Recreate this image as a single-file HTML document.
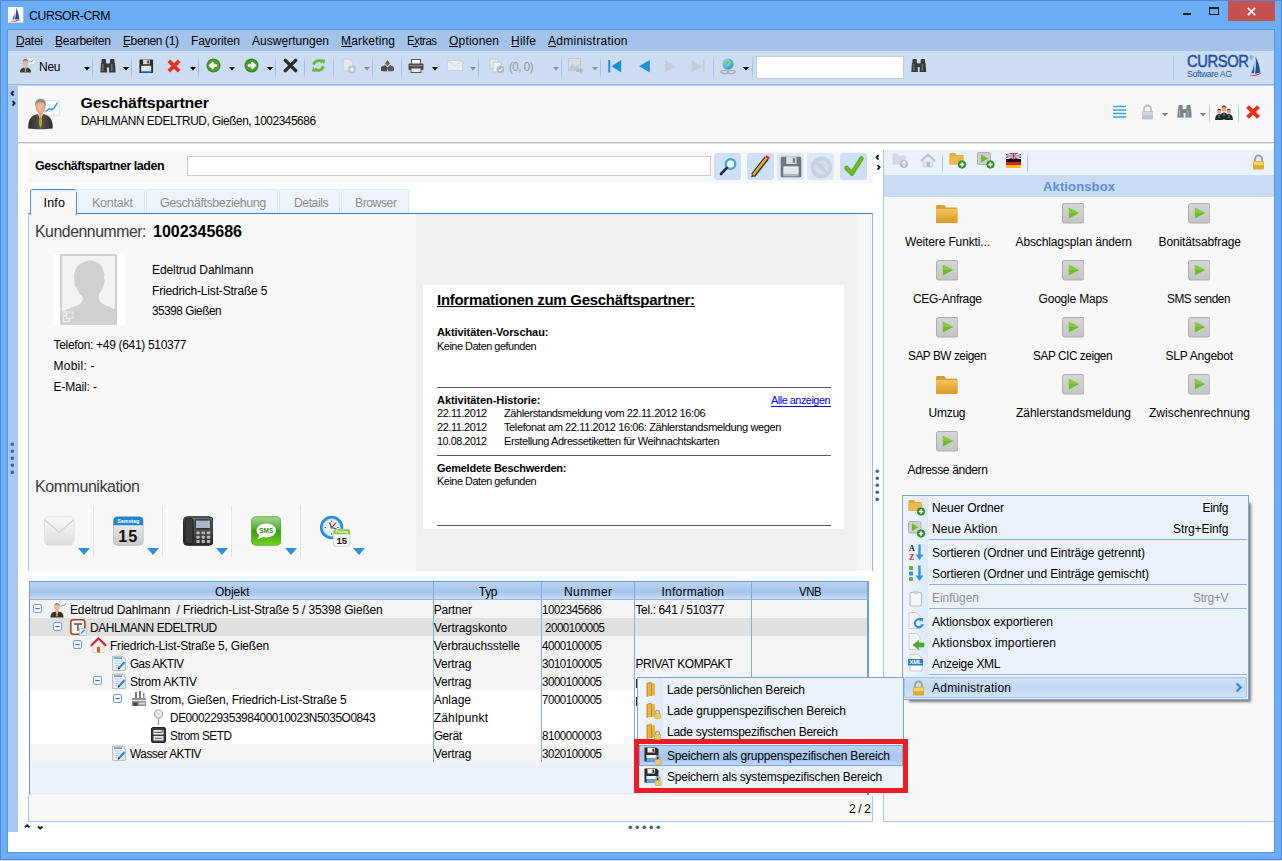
<!DOCTYPE html>
<html lang="de">
<head>
<meta charset="utf-8">
<title>CURSOR-CRM</title>
<style>
html,body{margin:0;padding:0}
body{width:1282px;height:861px;overflow:hidden;position:relative;background:#6BADF6;font-family:"Liberation Sans",sans-serif;font-size:12px;color:#000}
#app{position:absolute;left:0;top:0;width:1282px;height:861px;overflow:hidden}
#app div,#app svg,#app span.t{position:absolute}
#app div{box-sizing:border-box}
span.t{white-space:pre;line-height:1;transform-origin:0 50%}
</style>
</head>
<body>
<div id="app">
<div style="left:0px;top:0px;width:1282px;height:860px;background:#6BADF6;border:1px solid #5288CB;"></div>
<div style="left:0px;top:860px;width:1282px;height:1px;background:#E4EAF5;"></div>
<div style="left:8px;top:7px;width:16px;height:16px;background:#fff;"></div>
<svg style="left:8px;top:7px" width="16" height="16" viewBox="0 0 16 16"><path d="M8.200 1c2 3.500 3 7.500 2.800 11.500H6.800c1-3.700 1.500-7.500 1.400-11.500z" fill="#1F4E9C"/><path d="M6.700 4c-.2 3-1 5.800-2.500 8.500h2.300z" fill="#3A66AE"/><path d="M3 14.200c3.500 0 6.500-.8 9.500-2.200-2.300 2.500-5.800 3.400-9.500 2.200z" fill="#D8222A"/><path d="M15.500 0v16H0" stroke="#B9B9B9" stroke-width="1" fill="none"/></svg>
<span class="t" style="left:29px;top:9px;font-size:13.5px;letter-spacing:-0.45px;transform:scaleX(0.9086);">CURSOR-CRM</span>
<div style="left:1183px;top:13px;width:8px;height:2px;background:#1a1a1a;"></div>
<div style="left:1209px;top:7px;width:10px;height:8px;border:1px solid #1a1a1a;border-top-width:2px;"></div>
<div style="left:1228px;top:1px;width:47px;height:20px;background:#C75050;"></div>
<svg style="left:1247px;top:7px" width="9" height="9" viewBox="0 0 9 9"><path d="M.8.800l7.400 7.400M8.200.8L.8 8.200" stroke="#fff" stroke-width="1.700" fill="none"/></svg>
<div style="left:7px;top:29px;width:1268px;height:824px;background:#5A96DF;"></div>
<div style="left:8px;top:30px;width:1266px;height:822px;background:#fff;"></div>
<div style="left:8px;top:30px;width:1266px;height:21px;background:#A3C3EA;"></div>
<span class="t" style="left:16px;top:35px;font-size:12px;letter-spacing:-0.25px;">Datei</span>
<span class="t" style="left:55px;top:35px;font-size:12px;letter-spacing:-0.23px;">Bearbeiten</span>
<span class="t" style="left:123px;top:35px;font-size:12px;letter-spacing:-0.38px;">Ebenen (1)</span>
<span class="t" style="left:191px;top:35px;font-size:12px;letter-spacing:-0.13px;">Favoriten</span>
<span class="t" style="left:252px;top:35px;font-size:12px;letter-spacing:0.03px;">Auswertungen</span>
<span class="t" style="left:341px;top:35px;font-size:12px;letter-spacing:0.16px;">Marketing</span>
<span class="t" style="left:407px;top:35px;font-size:12px;letter-spacing:-0.45px;transform:scaleX(0.9444);">Extras</span>
<span class="t" style="left:449px;top:35px;font-size:12px;letter-spacing:0.19px;">Optionen</span>
<span class="t" style="left:511px;top:35px;font-size:12px;letter-spacing:0.25px;">Hilfe</span>
<span class="t" style="left:548px;top:35px;font-size:12px;letter-spacing:0.27px;">Administration</span>
<div style="left:16px;top:46px;width:8px;height:1px;background:#000;"></div>
<div style="left:55px;top:46px;width:7px;height:1px;background:#000;"></div>
<div style="left:123px;top:46px;width:6px;height:1px;background:#000;"></div>
<div style="left:203.5px;top:46px;width:6px;height:1px;background:#000;"></div>
<div style="left:283px;top:46px;width:4px;height:1px;background:#000;"></div>
<div style="left:341px;top:46px;width:10.5px;height:1px;background:#000;"></div>
<div style="left:412.5px;top:46px;width:5.5px;height:1px;background:#000;"></div>
<div style="left:449px;top:46px;width:9px;height:1px;background:#000;"></div>
<div style="left:511px;top:46px;width:8px;height:1px;background:#000;"></div>
<div style="left:548px;top:46px;width:8px;height:1px;background:#000;"></div>
<div style="left:8px;top:51px;width:1266px;height:33px;background:#CCDDF3;"></div>
<div style="left:8px;top:84px;width:1266px;height:1px;background:#8FB6E9;"></div>
<div style="left:8px;top:85px;width:1266px;height:1px;background:#B5D0F3;"></div>
<svg style="left:19px;top:57px" width="16" height="16" viewBox="0 0 16 16"><rect x="8.5" y="1" width="7" height="6" fill="#fff" stroke="#C9D3DF" stroke-width=".5"/><path d="M9.5 5.5l2-1.5 1 .8 2-2.3" stroke="#3C8FD9" stroke-width="1" fill="none"/><path d="M1 15.5c0-3.5 1.6-5 5.5-5s5.5 1.5 5.5 5z" fill="#3B3B3B"/><path d="M5.2 10.5h2.6L6.5 13z" fill="#fff"/><path d="M6.1 10.8h.8l.4 3.6-.8.9-.8-.9z" fill="#D9A821"/><ellipse cx="6.5" cy="6" rx="2.7" ry="3.4" fill="#E8B894"/><path d="M3.7 5.3c0-2.2 1.2-3.3 2.8-3.3s2.8 1.1 2.8 3.3c-.6-1.2-1.6-1.6-2.8-1.6s-2.2.4-2.8 1.6z" fill="#7A7A7A"/></svg>
<span class="t" style="left:39px;top:61px;font-size:12px;letter-spacing:-0.26px;">Neu</span>
<svg style="left:84px;top:66.5px" width="6" height="4" viewBox="0 0 6 4"><path d="M0 0h6L3 3.6z" fill="#000"/></svg>
<div style="left:92px;top:56px;width:1px;height:24px;background:linear-gradient(#C4D8F1,#9FBEE9 35%,#9FBEE9 65%,#C4D8F1);"></div>
<svg style="left:100px;top:58px" width="16" height="16" viewBox="0 0 16 16"><g fill="#3A3A3A"><rect x="1.5" y="1" width="4.5" height="5" rx="1"/><rect x="10" y="1" width="4.5" height="5" rx="1"/><path d="M1 5h5.5l.7 9.5H.3z"/><path d="M9.5 5H15l.7 9.5H8.8z"/><rect x="6" y="5.5" width="4" height="4"/></g><g fill="#6E6E6E"><rect x="2" y="6" width="1.5" height="7"/><rect x="11" y="6" width="1.5" height="7"/></g></svg>
<svg style="left:123px;top:66.5px" width="6" height="4" viewBox="0 0 6 4"><path d="M0 0h6L3 3.6z" fill="#000"/></svg>
<div style="left:131px;top:56px;width:1px;height:24px;background:linear-gradient(#C4D8F1,#9FBEE9 35%,#9FBEE9 65%,#C4D8F1);"></div>
<svg style="left:139px;top:59px" width="14.5" height="14.5" viewBox="0 0 16 16"><path d="M.5 1.500a1 1 0 0 1 1-1h13a1 1 0 0 1 1 1v13a1 1 0 0 1-1 1h-13a1 1 0 0 1-1-1z" fill="#2B2B2B"/><rect x="4.500" y=".8" width="7.500" height="5" fill="#D9D9D9"/><rect x="9.300" y="1.600" width="1.700" height="3.300" fill="#2B2B2B"/><rect x="2.500" y="7.500" width="11" height="6.500" fill="#F4F4F4"/><path d="M2.500 9.500h11M2.500 11.500h11" stroke="#D9D9D9" stroke-width=".7"/><rect x="2.500" y="13" width="11" height="1.800" fill="#2E9BE0"/></svg>
<svg style="left:167px;top:59px" width="14" height="14" viewBox="0 0 14 14"><path d="M3.2 3.2l7.600 7.600M10.800 3.2l-7.600 7.600" stroke="#E8301F" stroke-width="3.800" stroke-linecap="square" fill="none"/></svg>
<svg style="left:190px;top:66.5px" width="6" height="4" viewBox="0 0 6 4"><path d="M0 0h6L3 3.6z" fill="#000"/></svg>
<div style="left:198px;top:56px;width:1px;height:24px;background:linear-gradient(#C4D8F1,#9FBEE9 35%,#9FBEE9 65%,#C4D8F1);"></div>
<svg style="left:206px;top:57.5px" width="15" height="15" viewBox="0 0 16 16"><circle cx="8" cy="8" r="7.5" fill="#3B8A23"/><circle cx="8" cy="8" r="6" fill="#4A9E30"/><path d="M12 8H5M8 4.6L4.5 8 8 11.4" stroke="#fff" stroke-width="2.6" fill="none" stroke-linejoin="miter"/></svg>
<svg style="left:229px;top:66.5px" width="6" height="4" viewBox="0 0 6 4"><path d="M0 0h6L3 3.6z" fill="#000"/></svg>
<svg style="left:244px;top:57.5px" width="15" height="15" viewBox="0 0 16 16"><circle cx="8" cy="8" r="7.5" fill="#3B8A23"/><circle cx="8" cy="8" r="6" fill="#4A9E30"/><path d="M4 8h7M8 4.6L11.5 8 8 11.4" stroke="#fff" stroke-width="2.6" fill="none" stroke-linejoin="miter"/></svg>
<svg style="left:267px;top:66.5px" width="6" height="4" viewBox="0 0 6 4"><path d="M0 0h6L3 3.6z" fill="#000"/></svg>
<div style="left:275px;top:56px;width:1px;height:24px;background:linear-gradient(#C4D8F1,#9FBEE9 35%,#9FBEE9 65%,#C4D8F1);"></div>
<svg style="left:282.5px;top:58px" width="15" height="15" viewBox="0 0 14 14"><path d="M2.2 2.2L11.8 11.8M11.8 2.2L2.2 11.8" stroke="#2B2B2B" stroke-width="3.2" stroke-linecap="round" fill="none"/></svg>
<div style="left:304px;top:56px;width:1px;height:24px;background:linear-gradient(#C4D8F1,#9FBEE9 35%,#9FBEE9 65%,#C4D8F1);"></div>
<svg style="left:311px;top:57.5px" width="15" height="15" viewBox="0 0 16 16"><g fill="none" stroke="#6BB536" stroke-width="3"><path d="M2.8 7.2A5.4 5.4 0 0 1 12 4.6"/><path d="M13.2 8.8A5.4 5.4 0 0 1 4 11.4"/></g><path d="M10.2 1.2l5 .6-1.4 5z" fill="#6BB536"/><path d="M5.8 14.8l-5-.6 1.4-5z" fill="#6BB536"/></svg>
<div style="left:333px;top:56px;width:1px;height:24px;background:linear-gradient(#C4D8F1,#9FBEE9 35%,#9FBEE9 65%,#C4D8F1);"></div>
<svg style="left:340.5px;top:58px" width="16" height="16" viewBox="0 0 16 16"><path d="M2 1h7l3 3v9H2z" fill="#E3E7EE" stroke="#C3CAD6"/><circle cx="11" cy="11.500" r="4" fill="#B9C0CC"/><path d="M9 11.500h4M11 9.500v4" stroke="#fff" stroke-width="1.300"/></svg>
<svg style="left:364px;top:66.5px" width="6" height="4" viewBox="0 0 6 4"><path d="M0 0h6L3 3.6z" fill="#8A8F98"/></svg>
<div style="left:372px;top:56px;width:1px;height:24px;background:linear-gradient(#C4D8F1,#9FBEE9 35%,#9FBEE9 65%,#C4D8F1);"></div>
<svg style="left:380px;top:59px" width="15" height="14" viewBox="0 0 15 14"><path d="M7.500 1l2.500 3.500-2.500 2.500L5 4.500z" fill="#6B5E4E"/><path d="M1 8l4-2 3 3-1.500 3.500L1 12z" fill="#4A4A4A"/><path d="M14 8l-4-2-3 3 1.500 3.500L14 12z" fill="#5A5A5A"/></svg>
<div style="left:401px;top:56px;width:1px;height:24px;background:linear-gradient(#C4D8F1,#9FBEE9 35%,#9FBEE9 65%,#C4D8F1);"></div>
<svg style="left:408px;top:59px" width="16" height="14" viewBox="0 0 16 14"><rect x="3.500" y=".5" width="9" height="5" fill="#F4F4F4" stroke="#555"/><rect x=".5" y="4.500" width="15" height="6.500" rx="1" fill="#4A4A4A"/><rect x="3" y="9" width="10" height="4.500" fill="#E9E9E9" stroke="#555"/><rect x="1.500" y="6" width="13" height="1.200" fill="#8A8A8A"/></svg>
<svg style="left:432px;top:66.5px" width="6" height="4" viewBox="0 0 6 4"><path d="M0 0h6L3 3.6z" fill="#000"/></svg>
<svg style="left:446.5px;top:60px" width="16" height="12" viewBox="0 0 16 12"><rect x=".5" y=".5" width="15" height="10" fill="#E9EDF3" stroke="#CBD2DD"/><path d="M1 1l7 5 7-5" stroke="#D3D9E3" fill="none"/></svg>
<svg style="left:470px;top:66.5px" width="6" height="4" viewBox="0 0 6 4"><path d="M0 0h6L3 3.6z" fill="#8A8F98"/></svg>
<div style="left:478px;top:56px;width:1px;height:24px;background:linear-gradient(#C4D8F1,#9FBEE9 35%,#9FBEE9 65%,#C4D8F1);"></div>
<svg style="left:488.5px;top:58px" width="16" height="16" viewBox="0 0 16 16"><path d="M1 1h8v10H1z" fill="#E3E7EE" stroke="#C3CAD6"/><path d="M4 4h8v10H4z" fill="#EDF0F5" stroke="#C3CAD6"/><circle cx="11.500" cy="11.500" r="3.800" fill="#AEB6C3"/><path d="M9.800 11.500l1.300 1.300 2.200-2.500" stroke="#fff" stroke-width="1.200" fill="none"/></svg>
<span class="t" style="left:509px;top:61px;font-size:12px;color:#8F959E;letter-spacing:-0.45px;transform:scaleX(0.9509);">(0, 0)</span>
<svg style="left:553px;top:66.5px" width="6" height="4" viewBox="0 0 6 4"><path d="M0 0h6L3 3.6z" fill="#8A8F98"/></svg>
<div style="left:561px;top:56px;width:1px;height:24px;background:linear-gradient(#C4D8F1,#9FBEE9 35%,#9FBEE9 65%,#C4D8F1);"></div>
<svg style="left:568px;top:58px" width="16" height="16" viewBox="0 0 16 16"><rect x=".5" y=".5" width="12" height="12" fill="#D9DEE6" stroke="#C3CAD6"/><path d="M1.500 9l3-3 3 3 4-4v7h-10z" fill="#C3CAD6"/><path d="M8 11h4V9l3.500 3.500L12 16v-2H8z" fill="#B2BAC6"/></svg>
<svg style="left:592px;top:66.5px" width="6" height="4" viewBox="0 0 6 4"><path d="M0 0h6L3 3.6z" fill="#8A8F98"/></svg>
<div style="left:600px;top:56px;width:1px;height:24px;background:linear-gradient(#C4D8F1,#9FBEE9 35%,#9FBEE9 65%,#C4D8F1);"></div>
<svg style="left:608px;top:60px" width="14" height="12.5" viewBox="0 0 15 14"><rect x="0" y="0" width="2.200" height="14" fill="#1E8FD6"/><path d="M14.500 0v14L3.500 7z" fill="#1E8FD6"/></svg>
<svg style="left:637.5px;top:60px" width="12" height="12.5" viewBox="0 0 13 14"><path d="M13 0v14L1 7z" fill="#1E8FD6"/></svg>
<svg style="left:665px;top:60px" width="12" height="12.5" viewBox="0 0 13 14"><path d="M0 0v14l12-7z" fill="#C4CCD8"/></svg>
<svg style="left:691px;top:60px" width="14" height="12.5" viewBox="0 0 15 14"><rect x="12.800" y="0" width="2.200" height="14" fill="#C4CCD8"/><path d="M.5 0v14l11-7z" fill="#C4CCD8"/></svg>
<div style="left:713px;top:56px;width:1px;height:24px;background:linear-gradient(#C4D8F1,#9FBEE9 35%,#9FBEE9 65%,#C4D8F1);"></div>
<svg style="left:720px;top:58px" width="16" height="17" viewBox="0 0 16 17"><defs><radialGradient id="gl" cx=".4" cy=".35" r=".7"><stop offset="0" stop-color="#BFE9F7"/><stop offset=".6" stop-color="#4DB6E0"/><stop offset="1" stop-color="#2C8DBE"/></radialGradient></defs><ellipse cx="4.500" cy="14" rx="3.500" ry="1.700" fill="none" stroke="#A9A9A9" stroke-width="1.300"/><ellipse cx="11.500" cy="14" rx="3.500" ry="1.700" fill="none" stroke="#A9A9A9" stroke-width="1.300"/><circle cx="8" cy="6" r="5.500" fill="url(#gl)"/><path d="M5 4c1-1.500 3-2 4-1s0 2.500-1 3-1 2-2 2-2-2-1-4z" fill="#7BC86A"/></svg>
<svg style="left:743px;top:66.5px" width="6" height="4" viewBox="0 0 6 4"><path d="M0 0h6L3 3.6z" fill="#000"/></svg>
<div style="left:752px;top:56px;width:1px;height:24px;background:linear-gradient(#C4D8F1,#9FBEE9 35%,#9FBEE9 65%,#C4D8F1);"></div>
<div style="left:755.5px;top:55.5px;width:148.5px;height:23px;background:#fff;border:1px solid #C9CDD3;"></div>
<svg style="left:911px;top:57.5px" width="15.5" height="15.5" viewBox="0 0 16 16"><g fill="#3A3A3A"><rect x="1.5" y="1" width="4.5" height="5" rx="1"/><rect x="10" y="1" width="4.5" height="5" rx="1"/><path d="M1 5h5.5l.7 9.5H.3z"/><path d="M9.5 5H15l.7 9.5H8.8z"/><rect x="6" y="5.5" width="4" height="4"/></g><g fill="#6E6E6E"><rect x="2" y="6" width="1.5" height="7"/><rect x="11" y="6" width="1.5" height="7"/></g></svg>
<div style="left:1173px;top:56px;width:1px;height:24px;background:#A9C4E8;"></div>
<span class="t" style="left:1187px;top:54px;font-size:16px;color:#1F4E9C;letter-spacing:-0.45px;transform:scaleX(0.9241);-webkit-text-stroke:.45px #1F4E9C;">CURSOR</span>
<span class="t" style="left:1249.5px;top:55.5px;font-size:5px;color:#1F4E9C;">®</span>
<span class="t" style="left:1187px;top:70px;font-size:9px;color:#2A559F;letter-spacing:-0.45px;transform:scaleX(0.9776);">Software AG</span>
<svg style="left:1249px;top:55px" width="13" height="23" viewBox="0 0 15 23"><path d="M7.500 0c3 6 5 12 5.500 18.500l-6 1.500c1-6.500 1.200-13 .5-20z" fill="#1F4E9C"/><path d="M6 5.500c-.3 5-1.500 9.500-3.500 14l3.500-.8z" fill="#1F4E9C"/><path d="M0 22c5-.2 10-1.300 15-3.500-4 3.500-9.500 4.800-15 3.500z" fill="#D8222A"/></svg>
<div style="left:8px;top:86px;width:10px;height:746px;background:#A9C9F2;"></div>
<svg style="left:9.5px;top:89.5px" width="5.2" height="6.6" viewBox="0 0 5.2 6.6"><path d="M3.600 1L1.600 3.300l2 2.300" stroke="#0F1E35" stroke-width="1.900" fill="none"/></svg>
<svg style="left:11.2px;top:99.8px" width="5.2" height="6.6" viewBox="0 0 5.2 6.6"><path d="M1.600 1l2 2.300-2 2.300" stroke="#0F1E35" stroke-width="1.900" fill="none"/></svg>
<svg style="left:9.7px;top:441.8px" width="4.6" height="32.6" viewBox="0 0 4.6 32.6"><circle cx="2.3" cy="2.3" r="1.8" fill="#48638A"/><circle cx="2.3" cy="9.3" r="1.8" fill="#48638A"/><circle cx="2.3" cy="16.3" r="1.8" fill="#48638A"/><circle cx="2.3" cy="23.3" r="1.8" fill="#48638A"/><circle cx="2.3" cy="30.3" r="1.8" fill="#48638A"/></svg>
<div style="left:18px;top:86px;width:1256px;height:56px;background:#F8F8F8;"></div>
<div style="left:18px;top:142px;width:1256px;height:1px;background:#BDBDBD;"></div>
<div style="left:18px;top:143px;width:1256px;height:1px;background:#E4E4E4;"></div>
<svg style="left:27px;top:97px" width="34" height="34" viewBox="0 0 34 34"><defs><linearGradient id="bpb" x1="0" y1="0" x2="1" y2="0"><stop offset="0" stop-color="#2E2E2E"/><stop offset=".5" stop-color="#555"/><stop offset="1" stop-color="#2E2E2E"/></linearGradient><radialGradient id="bph" cx=".5" cy=".55" r=".6"><stop offset="0" stop-color="#F6C7AE"/><stop offset="1" stop-color="#DD9270"/></radialGradient></defs><rect x="17.500" y="3.500" width="15" height="15" fill="#FDFDFD" stroke="#DDE2E8" stroke-width=".8"/><path d="M18 8.500h14M18 13.500h14M22.500 4v14M27.500 4v14" stroke="#E9EDF2" stroke-width=".6"/><path d="M18.500 14.500l4-3 2.500 1.200 2-1.500 3.500-5.500" stroke="#2FA0E0" stroke-width="1.500" fill="none"/><path d="M1.300 31.500c-.6-7.500 2.500-12.500 7-13.800l5.200-1.200 5.200 1.200c4.500 1.300 7.600 6.300 7 13.800-6 1-18.400 1-24.400 0z" fill="url(#bpb)"/><path d="M10.800 16.800h5.400l-2.700 6z" fill="#F4F4F4"/><path d="M12.700 17.200h1.600l.8 9.500-1.600 4.300-1.600-4.300z" fill="#C8A616"/><path d="M11.500 13h4v4l-2 1.500-2-1.500z" fill="#D98E6E"/><ellipse cx="13.500" cy="9.500" rx="5.100" ry="6.600" fill="url(#bph)"/><path d="M8.200 9c-.6-5 1.800-7.300 5.300-7.300s5.900 2.300 5.300 7.300c-.8-2.800-2.500-4-5.300-4s-4.500 1.200-5.300 4z" fill="#8A8A8A"/></svg>
<span class="t" style="left:80.5px;top:95px;font-size:16px;font-weight:bold;letter-spacing:-0.27px;transform-origin:0 13px;transform:scale(1.0000,0.9300);">Geschäftspartner</span>
<span class="t" style="left:80.5px;top:115px;font-size:12px;letter-spacing:-0.45px;transform:scaleX(0.9887);">DAHLMANN EDELTRUD, Gießen, 1002345686</span>
<svg style="left:1113px;top:105px" width="13" height="14" viewBox="0 0 13 14"><path d="M0 1.500h13M0 5h13M0 8.500h13M0 12h13" stroke="#3FA3E0" stroke-width="1.500"/></svg>
<svg style="left:1141px;top:104px" width="13" height="16" viewBox="0 0 13 16"><path d="M3 7.5V5a3.5 3.5 0 0 1 7 0v2.5" fill="none" stroke="#B8BEC8" stroke-width="1.8"/><rect x="1" y="7" width="11" height="8.5" rx="1" fill="#BFC6D0"/><rect x="1.8" y="7.8" width="9.4" height="3.4" fill="#D3D8E0"/></svg>
<svg style="left:1162px;top:113px" width="6" height="4" viewBox="0 0 6 4"><path d="M0 0h6L3 3.6z" fill="#7A7F88"/></svg>
<svg style="left:1177px;top:104px" width="15" height="15" viewBox="0 0 16 16"><g fill="#7C828C"><rect x="1.5" y="1" width="4.5" height="5" rx="1"/><rect x="10" y="1" width="4.5" height="5" rx="1"/><path d="M1 5h5.5l.7 9.5H.3z"/><path d="M9.5 5H15l.7 9.5H8.8z"/><rect x="6" y="5.5" width="4" height="4"/></g><g fill="#A9AEB6"><rect x="2" y="6" width="1.5" height="7"/><rect x="11" y="6" width="1.5" height="7"/></g></svg>
<svg style="left:1200px;top:113px" width="6" height="4" viewBox="0 0 6 4"><path d="M0 0h6L3 3.6z" fill="#7A7F88"/></svg>
<div style="left:1209px;top:102px;width:1px;height:22px;background:linear-gradient(#F8F8F8,#A9C6EC 30%,#A9C6EC 70%,#F8F8F8);"></div>
<svg style="left:1215px;top:104px" width="18" height="16" viewBox="0 0 18 16"><g fill="#2A2A2A"><path d="M4.500 15.500c0-5 2-7 4.500-7s4.500 2 4.500 7z"/><path d="M0 16c0-4 1.700-6 4-6s4 2 4 6z"/><path d="M10 16c0-4 1.700-6 4-6s4 2 4 6z"/></g><path d="M8.500 9h1l.3 3h-1.600z" fill="#1FA6A0"/><path d="M3.600 11h.8l.3 3h-1.400zM13.600 11h.8l.3 3h-1.400z" fill="#1FA6A0"/><g fill="#E2A57C"><ellipse cx="9" cy="5" rx="2.300" ry="2.800"/><ellipse cx="4.200" cy="7.800" rx="2" ry="2.400"/><ellipse cx="13.800" cy="7.800" rx="2" ry="2.400"/></g><g fill="#6B3A1E"><path d="M6.700 4.200c0-2 1-2.700 2.300-2.700s2.300.7 2.300 2.700c-.8-1-1.500-1.200-2.300-1.200s-1.500.2-2.300 1.200z"/><path d="M2.200 7c0-1.700.9-2.300 2-2.300s2 .6 2 2.300c-.7-.8-1.300-1-2-1s-1.300.2-2 1zM11.800 7c0-1.700.9-2.300 2-2.300s2 .6 2 2.300c-.7-.8-1.300-1-2-1s-1.300.2-2 1z"/></g></svg>
<div style="left:1238px;top:102px;width:1px;height:22px;background:linear-gradient(#F8F8F8,#A9C6EC 30%,#A9C6EC 70%,#F8F8F8);"></div>
<svg style="left:1246px;top:105px" width="14" height="14" viewBox="0 0 14 14"><path d="M3 3l8 8M11 3l-8 8" stroke="#E8301F" stroke-width="4" stroke-linecap="square" fill="none"/></svg>
<div style="left:28px;top:150px;width:845px;height:33px;background:#F7F7F7;"></div>
<span class="t" style="left:34.5px;top:159.5px;font-size:12.5px;font-weight:bold;letter-spacing:-0.45px;transform:scaleX(0.9947);">Geschäftspartner laden</span>
<div style="left:187px;top:156px;width:524px;height:19.5px;background:#fff;border:1px solid #CDCDCD;"></div>
<div style="left:714px;top:153px;width:27px;height:27px;background:#CFE0F6;border-radius:3px;"></div>
<div style="left:747px;top:153px;width:27px;height:27px;background:#CFE0F6;border-radius:3px;"></div>
<div style="left:777px;top:153px;width:27px;height:27px;background:#DCE8F8;border-radius:3px;"></div>
<div style="left:807px;top:153px;width:27px;height:27px;background:#DCE8F8;border-radius:3px;"></div>
<div style="left:840px;top:153px;width:27px;height:27px;background:#CFE0F6;border-radius:3px;"></div>
<svg style="left:718px;top:157px" width="20" height="20" viewBox="0 0 20 20"><circle cx="12.500" cy="7" r="4.800" fill="#F4FAFF" stroke="#3FA3E0" stroke-width="2.200"/><path d="M8.800 10.800L3 17" stroke="#1E2B3C" stroke-width="2.600" stroke-linecap="round"/></svg>
<svg style="left:749px;top:155px" width="24" height="24" viewBox="0 0 24 24"><path d="M4 20.500L17.500 3" stroke="#E9B421" stroke-width="4"/><path d="M5.500 21.500L19 4.200" stroke="#2B2B2B" stroke-width="1.400"/><path d="M2.700 19L16.200 1.800" stroke="#2B2B2B" stroke-width="1.200"/><path d="M16.300 2l3.400 2.600 1.300-1.800-3.300-2.600z" fill="#D8222A"/><path d="M2 22.500l1-3.500 2.800 2.200z" fill="#4A3A2A"/></svg>
<svg style="left:780px;top:156px" width="22" height="22" viewBox="0 0 16 16"><path d="M.5 1.500a1 1 0 0 1 1-1h13a1 1 0 0 1 1 1v13a1 1 0 0 1-1 1h-13a1 1 0 0 1-1-1z" fill="#6F7780"/><rect x="4.500" y=".8" width="7.500" height="5" fill="#DDE1E7"/><rect x="9.300" y="1.600" width="1.700" height="3.300" fill="#6F7780"/><rect x="2.500" y="7.500" width="11" height="6.500" fill="#E9ECF0"/><path d="M2.500 9.500h11M2.500 11.500h11" stroke="#DDE1E7" stroke-width=".7"/><rect x="2.500" y="13" width="11" height="1.800" fill="#AEB6C2"/></svg>
<svg style="left:809.5px;top:155.5px" width="23" height="23" viewBox="0 0 23 23"><circle cx="11.500" cy="11.500" r="9" fill="#D3DDEB" stroke="#C5D1E2" stroke-width="3.600"/><path d="M5.500 5.500l12 12" stroke="#C5D1E2" stroke-width="3.600"/></svg>
<svg style="left:842px;top:155px" width="24" height="24" viewBox="0 0 24 24"><path d="M4.500 13l5.500 5.500L19.500 3.500" stroke="#5CAE22" stroke-width="4.600" fill="none" stroke-linejoin="round" stroke-linecap="round"/><path d="M5 13l5 5L19.500 4" stroke="#74BE2C" stroke-width="2" fill="none" stroke-linecap="round"/></svg>
<svg style="left:874.8px;top:153.7px" width="5.2" height="6.6" viewBox="0 0 5.2 6.6"><path d="M3.600 1L1.600 3.300l2 2.300" stroke="#0F1E35" stroke-width="1.900" fill="none"/></svg>
<svg style="left:875.5px;top:164.3px" width="5.2" height="6.6" viewBox="0 0 5.2 6.6"><path d="M1.600 1l2 2.300-2 2.300" stroke="#0F1E35" stroke-width="1.900" fill="none"/></svg>
<div style="left:78px;top:189px;width:67px;height:25px;background:#EEF4FC;border:1px solid #DCE7F6;border-bottom:none;border-radius:2px 2px 0 0;"></div>
<span class="t" style="left:92px;top:197px;font-size:12.5px;color:#8E8E8E;letter-spacing:-0.23px;">Kontakt</span>
<div style="left:146px;top:189px;width:132px;height:25px;background:#EEF4FC;border:1px solid #DCE7F6;border-bottom:none;border-radius:2px 2px 0 0;"></div>
<span class="t" style="left:160px;top:197px;font-size:12.5px;color:#8E8E8E;letter-spacing:-0.45px;">Geschäftsbeziehung</span>
<div style="left:279px;top:189px;width:61px;height:25px;background:#EEF4FC;border:1px solid #DCE7F6;border-bottom:none;border-radius:2px 2px 0 0;"></div>
<span class="t" style="left:293.5px;top:197px;font-size:12.5px;color:#8E8E8E;letter-spacing:-0.45px;transform:scaleX(0.9713);">Details</span>
<div style="left:341px;top:189px;width:68px;height:25px;background:#EEF4FC;border:1px solid #DCE7F6;border-bottom:none;border-radius:2px 2px 0 0;"></div>
<span class="t" style="left:355px;top:197px;font-size:12.5px;color:#8E8E8E;letter-spacing:-0.45px;transform:scaleX(0.9735);">Browser</span>
<div style="left:28px;top:213px;width:845px;height:358px;background:#F8F8F8;border-left:1px solid #A9C6EC;border-right:1px solid #96B9EA;border-top:1px solid #3F7FD0;"></div>
<div style="left:30px;top:189px;width:47px;height:25.5px;background:#F8F8F8;border:1px solid #4F8BD6;border-bottom:none;border-radius:3px 3px 0 0;"></div>
<div style="left:30.5px;top:190px;width:46px;height:2px;background:linear-gradient(#DCE9FA,#F8F8F8);border-radius:3px 3px 0 0;"></div>
<span class="t" style="left:43.5px;top:197px;font-size:12.5px;letter-spacing:0.21px;">Info</span>
<span class="t" style="left:35px;top:224px;font-size:16px;color:#3a3a3a;letter-spacing:-0.45px;transform:scaleX(0.9876);">Kundennummer:</span>
<span class="t" style="left:153px;top:224px;font-size:16px;font-weight:bold;">1002345686</span>
<div style="left:53px;top:253px;width:71.5px;height:72px;background:#fff;"></div>
<div style="left:60px;top:254px;width:57px;height:71px;background:#F3F3F3;border:2px solid #D0D0D0;border-bottom:none;"></div>
<svg style="left:60px;top:254px" width="57" height="71" viewBox="0 0 57 71"><path transform="translate(29,6.600) scale(1.140) translate(-26.300,-13.700)" d="M2 71V60c2-2.500 6-4 11-5.500 4-1.200 6.500-3 7.500-5.500.5-1.500.3-3-.5-4.500-2-1.500-3.500-4-4.500-7-1.500-.8-2.200-3-2-6-.8-3.500-.5-7 1-10 1.500-3.500 4.500-5.800 8-6.500 2-1.500 6-1.800 9-.5 4 1 6.500 4 7.500 8 .8 2 1 4.500.3 6.500 1.200 1.500 1 4-.5 6.500-.3 3-1.500 5-3 6.500-1 2-1.500 4.500-.5 6.500 1.500 2.500 4 4 8 5.500 4.500 1.500 8.500 3.500 12.200 5.500V71z" fill="#D0D0D0"/><rect x="3.500" y="61.500" width="6" height="6" fill="none" stroke="#EDEDED" stroke-width="1.200"/><rect x="6.500" y="58" width="6.500" height="6.500" fill="#D0D0D0" stroke="#EDEDED" stroke-width="1.200"/><path d="M2.500 60.500l2-2.500 2 2.500" fill="none" stroke="#EDEDED" stroke-width="1.200"/></svg>
<span class="t" style="left:152px;top:264px;font-size:12px;letter-spacing:-0.08px;">Edeltrud Dahlmann</span>
<span class="t" style="left:152px;top:285px;font-size:12px;letter-spacing:-0.18px;">Friedrich-List-Straße 5</span>
<span class="t" style="left:152px;top:305px;font-size:12px;letter-spacing:-0.45px;transform:scaleX(0.9773);">35398 Gießen</span>
<span class="t" style="left:53.5px;top:339px;font-size:12px;letter-spacing:-0.31px;">Telefon: +49 (641) 510377</span>
<span class="t" style="left:53.5px;top:360px;font-size:12px;letter-spacing:0.24px;">Mobil: -</span>
<span class="t" style="left:53.5px;top:381px;font-size:12px;letter-spacing:-0.15px;">E-Mail: -</span>
<span class="t" style="left:35px;top:479px;font-size:16px;color:#3a3a3a;letter-spacing:-0.45px;">Kommunikation</span>
<div style="left:93px;top:506px;width:1px;height:51px;background:#E6E6E6;"></div>
<div style="left:162px;top:506px;width:1px;height:51px;background:#E6E6E6;"></div>
<div style="left:231px;top:506px;width:1px;height:51px;background:#E6E6E6;"></div>
<div style="left:300px;top:506px;width:1px;height:51px;background:#E6E6E6;"></div>
<svg style="left:78px;top:548px" width="12" height="7" viewBox="0 0 12 7"><path d="M0 0h12L6 7z" fill="#2F8FDB"/></svg>
<svg style="left:147px;top:548px" width="12" height="7" viewBox="0 0 12 7"><path d="M0 0h12L6 7z" fill="#2F8FDB"/></svg>
<svg style="left:216px;top:548px" width="12" height="7" viewBox="0 0 12 7"><path d="M0 0h12L6 7z" fill="#2F8FDB"/></svg>
<svg style="left:285px;top:548px" width="12" height="7" viewBox="0 0 12 7"><path d="M0 0h12L6 7z" fill="#2F8FDB"/></svg>
<svg style="left:353px;top:548px" width="12" height="7" viewBox="0 0 12 7"><path d="M0 0h12L6 7z" fill="#2F8FDB"/></svg>
<svg style="left:44px;top:516px" width="30.5" height="30" viewBox="0 0 32 31"><defs><linearGradient id="ml" x1="0" y1="0" x2="0" y2="1"><stop offset="0" stop-color="#FAFAFA"/><stop offset="1" stop-color="#DCDCDC"/></linearGradient></defs><rect x=".5" y=".5" width="31" height="30" rx="4.500" fill="url(#ml)" stroke="#E2E2E2"/><path d="M1 4l15 13L31 4" stroke="#CFCFCF" stroke-width="1.200" fill="none"/><path d="M1 28l11-12M31 28L20 16" stroke="#E9E9E9" stroke-width="1" fill="none"/></svg>
<svg style="left:113px;top:516px" width="30.5" height="30" viewBox="0 0 32 31"><defs><linearGradient id="cl" x1="0" y1="0" x2="0" y2="1"><stop offset="0" stop-color="#F6F6F6"/><stop offset="1" stop-color="#C9C9C9"/></linearGradient></defs><rect x=".5" y=".5" width="31" height="30" rx="4" fill="url(#cl)" stroke="#BDBDBD"/><path d="M.5 9.500V4.500a4 4 0 0 1 4-4h23a4 4 0 0 1 4 4v5z" fill="#1F86D1"/><text x="16" y="7.500" font-family="Liberation Sans,sans-serif" font-size="5.500" font-weight="bold" fill="#fff" text-anchor="middle">Samstag</text><text x="16" y="27" font-family="Liberation Sans,sans-serif" font-size="17" font-weight="bold" fill="#111" text-anchor="middle" letter-spacing="1">15</text></svg>
<svg style="left:182.5px;top:516px" width="30.5" height="30" viewBox="0 0 32 31"><defs><linearGradient id="ph" x1="0" y1="0" x2="0" y2="1"><stop offset="0" stop-color="#6A6A6A"/><stop offset="1" stop-color="#2A2A2A"/></linearGradient></defs><rect x=".5" y=".5" width="31" height="30" rx="4" fill="url(#ph)" stroke="#222"/><rect x="2" y="2" width="8.500" height="27" rx="3" fill="#3A3A3A" stroke="#1a1a1a"/><rect x="13" y="4" width="16" height="9" rx="1" fill="#A9B8C8" stroke="#222"/><g fill="#B9B9B9"><rect x="14" y="16" width="3.500" height="3" rx=".8"/><rect x="19.500" y="16" width="3.500" height="3" rx=".8"/><rect x="25" y="16" width="3.500" height="3" rx=".8"/><rect x="14" y="20.500" width="3.500" height="3" rx=".8"/><rect x="19.500" y="20.500" width="3.500" height="3" rx=".8"/><rect x="25" y="20.500" width="3.500" height="3" rx=".8"/><rect x="14" y="25" width="3.500" height="3" rx=".8"/><rect x="19.500" y="25" width="3.500" height="3" rx=".8"/><rect x="25" y="25" width="3.500" height="3" rx=".8"/></g></svg>
<svg style="left:250.5px;top:516px" width="30.5" height="30" viewBox="0 0 32 31"><defs><linearGradient id="sm" x1="0" y1="0" x2="0" y2="1"><stop offset="0" stop-color="#A6D697"/><stop offset=".42" stop-color="#56AB34"/><stop offset=".5" stop-color="#3A9A12"/><stop offset="1" stop-color="#72D61E"/></linearGradient></defs><rect x=".5" y=".5" width="31" height="30" rx="4.500" fill="url(#sm)" stroke="#4FA52A" stroke-width=".8"/><ellipse cx="16" cy="15" rx="10.300" ry="7.300" fill="#fff"/><path d="M9.500 19l-3 5.500 7-3z" fill="#fff"/><text x="16" y="17.700" font-family="Liberation Sans,sans-serif" font-size="6.800" font-weight="bold" fill="#2F8F1A" text-anchor="middle">SMS</text></svg>
<svg style="left:319px;top:514px" width="32" height="33" viewBox="0 0 32 33"><defs><radialGradient id="ck" cx=".5" cy=".45" r=".6"><stop offset="0" stop-color="#FFFFFF"/><stop offset="1" stop-color="#D9DEE4"/></radialGradient></defs><circle cx="12.600" cy="13.500" r="10.300" fill="url(#ck)" stroke="#2391DC" stroke-width="2.800"/><circle cx="12.600" cy="13.500" r="8.700" fill="none" stroke="#8CC8F0" stroke-width=".6"/><path d="M12.600 6.500v1.500M12.600 19v1.500M5.600 13.500h1.500M18.100 13.500h1.500" stroke="#555" stroke-width="1"/><path d="M12.600 13.500l4.500-4.800" stroke="#E02020" stroke-width="1.200"/><path d="M12.600 13.500L10.500 8.500M12.600 13.500l5 1.500" stroke="#444" stroke-width="1.300"/><circle cx="12.600" cy="13.500" r="1.300" fill="#2391DC"/><rect x="14.500" y="15.300" width="16.500" height="17" rx="2.200" fill="#F6F6F6" stroke="#D0D0D0" stroke-width=".8"/><path d="M14.500 20.300v-2.800a2.200 2.200 0 0 1 2.200-2.200h12.100a2.200 2.200 0 0 1 2.200 2.200v2.800z" fill="#8CC63F"/><text x="22.750" y="19.300" font-family="Liberation Sans,sans-serif" font-size="3.600" font-weight="bold" fill="#F3FAE6" text-anchor="middle">Freitag</text><text x="22.750" y="30" font-family="Liberation Sans,sans-serif" font-size="9.500" font-weight="bold" fill="#111" text-anchor="middle">15</text></svg>
<div style="left:416px;top:214px;width:441px;height:357px;background:#F0F0F0;"></div>
<div style="left:423px;top:285px;width:421px;height:244px;background:#fff;"></div>
<span class="t" style="left:437px;top:292px;font-size:15px;font-weight:bold;letter-spacing:-0.28px;">Informationen zum Geschäftspartner:</span>
<div style="left:437px;top:306px;width:258px;height:1px;background:#000;"></div>
<span class="t" style="left:437px;top:327px;font-size:11px;font-weight:bold;letter-spacing:-0.07px;">Aktivitäten-Vorschau:</span>
<span class="t" style="left:437px;top:341px;font-size:11px;letter-spacing:-0.45px;transform:scaleX(0.9858);">Keine Daten gefunden</span>
<div style="left:437px;top:386.5px;width:394px;height:1px;background:#5A5A5A;"></div>
<span class="t" style="left:437px;top:395px;font-size:11px;font-weight:bold;letter-spacing:-0.05px;">Aktivitäten-Historie:</span>
<span class="t" style="left:771px;top:395px;font-size:11px;color:#0000EE;letter-spacing:-0.45px;transform:scaleX(0.9808);">Alle anzeigen</span>
<div style="left:771px;top:405.5px;width:59.5px;height:1px;background:#0000EE;"></div>
<span class="t" style="left:437px;top:408px;font-size:11px;letter-spacing:-0.45px;">22.11.2012</span>
<span class="t" style="left:504px;top:408px;font-size:11px;letter-spacing:-0.41px;">Zählerstandsmeldung vom 22.11.2012 16:06</span>
<span class="t" style="left:437px;top:422px;font-size:11px;letter-spacing:-0.45px;">22.11.2012</span>
<span class="t" style="left:504px;top:422px;font-size:11px;letter-spacing:-0.38px;">Telefonat am 22.11.2012 16:06: Zählerstandsmeldung wegen</span>
<span class="t" style="left:437px;top:436px;font-size:11px;letter-spacing:-0.45px;transform:scaleX(0.9802);">10.08.2012</span>
<span class="t" style="left:504px;top:436px;font-size:11px;letter-spacing:-0.4px;">Erstellung Adressetiketten für Weihnachtskarten</span>
<div style="left:437px;top:455px;width:394px;height:1px;background:#5A5A5A;"></div>
<span class="t" style="left:437px;top:463px;font-size:11px;font-weight:bold;letter-spacing:-0.24px;">Gemeldete Beschwerden:</span>
<span class="t" style="left:437px;top:476px;font-size:11px;letter-spacing:-0.45px;transform:scaleX(0.9858);">Keine Daten gefunden</span>
<div style="left:437px;top:525px;width:394px;height:1px;background:#5A5A5A;"></div>
<div style="left:870px;top:214px;width:1px;height:357px;background:#EDEDED;"></div>
<div style="left:871px;top:214px;width:1px;height:357px;background:#fff;"></div>
<div style="left:857px;top:569px;width:14px;height:1px;background:#EDEDED;"></div>
<div style="left:857px;top:570px;width:15px;height:1px;background:#fff;"></div>
<svg style="left:875.1px;top:468.9px" width="4.6" height="32.6" viewBox="0 0 4.6 32.6"><circle cx="2.3" cy="2.3" r="1.8" fill="#48638A"/><circle cx="2.3" cy="9.3" r="1.8" fill="#48638A"/><circle cx="2.3" cy="16.3" r="1.8" fill="#48638A"/><circle cx="2.3" cy="23.3" r="1.8" fill="#48638A"/><circle cx="2.3" cy="30.3" r="1.8" fill="#48638A"/></svg>
<div style="left:29px;top:581px;width:840px;height:19px;background:linear-gradient(#BDD5F2 0%,#B0CCEE 30%,#A4C4EB 58%,#B7D0F0 80%,#D0E0F5 100%);border:1px solid #6FA0DF;border-right-width:2px;border-bottom-color:#8DB4E6;"></div>
<div style="left:433px;top:581px;width:1px;height:19px;background:#7BA7E3;"></div>
<div style="left:541px;top:581px;width:1px;height:19px;background:#7BA7E3;"></div>
<div style="left:634px;top:581px;width:1px;height:19px;background:#7BA7E3;"></div>
<div style="left:751px;top:581px;width:1px;height:19px;background:#7BA7E3;"></div>
<span class="t" style="left:215px;top:586px;font-size:12px;letter-spacing:-0.04px;">Objekt</span>
<span class="t" style="left:478.8px;top:586px;font-size:12px;letter-spacing:-0.32px;">Typ</span>
<span class="t" style="left:564px;top:586px;font-size:12px;letter-spacing:0.4px;">Nummer</span>
<span class="t" style="left:661.5px;top:586px;font-size:12px;letter-spacing:0.25px;">Information</span>
<span class="t" style="left:798.5px;top:586px;font-size:12px;letter-spacing:-0.45px;transform:scaleX(0.9459);">VNB</span>
<div style="left:30px;top:600px;width:837px;height:18px;background:#F4F4F4;"></div>
<div style="left:30px;top:618px;width:837px;height:18px;background:#E0E0E0;"></div>
<div style="left:30px;top:636px;width:837px;height:18px;background:#F4F4F4;"></div>
<div style="left:30px;top:654px;width:837px;height:18px;background:#F4F4F4;"></div>
<div style="left:30px;top:672px;width:837px;height:18px;background:#F4F4F4;"></div>
<div style="left:30px;top:690px;width:837px;height:18px;background:#fff;"></div>
<div style="left:30px;top:708px;width:837px;height:18px;background:#fff;"></div>
<div style="left:30px;top:726px;width:837px;height:18px;background:#fff;"></div>
<div style="left:30px;top:744px;width:837px;height:18px;background:#F4F4F4;"></div>
<div style="left:30px;top:762px;width:838px;height:33px;background:#EAF1FB;"></div>
<div style="left:29px;top:600px;width:1px;height:195px;background:#5E93D9;"></div>
<div style="left:867px;top:600px;width:2px;height:195px;background:#6A9EDE;"></div>
<div style="left:433px;top:600px;width:1px;height:162px;background:#82ABE4;"></div>
<div style="left:541px;top:600px;width:1px;height:162px;background:#82ABE4;"></div>
<div style="left:634px;top:600px;width:1px;height:162px;background:#82ABE4;"></div>
<div style="left:751px;top:600px;width:1px;height:162px;background:#82ABE4;"></div>
<svg style="left:33px;top:604px" width="9" height="9" viewBox="0 0 9 9"><rect x=".5" y=".5" width="8" height="8" rx="1.500" fill="#F7FAFE" stroke="#6F9FDC"/><path d="M2.300 4.500h4.400" stroke="#3B6FB5" stroke-width="1.200"/></svg>
<svg style="left:50px;top:600.5px" width="17" height="17" viewBox="0 0 17 17"><rect x="9.500" y="1" width="7" height="6.500" fill="#fff" stroke="#D5DCE6" stroke-width=".5"/><path d="M10.500 6l2-1.800 1.200.8 2.300-2.800" stroke="#3C8FD9" stroke-width="1" fill="none"/><path d="M.5 16.500c0-4 1.600-6 6.500-6s6.500 2 6.500 6z" fill="#333"/><path d="M5.500 10.500h3L7 13.500z" fill="#F4F4F4"/><path d="M6.600 10.800h.8l.5 4-.9 1.200-.9-1.200z" fill="#D4A017"/><ellipse cx="7" cy="6.300" rx="2.800" ry="3.600" fill="#E9B995"/><path d="M4.100 5.500c0-2.500 1.200-3.500 2.900-3.500s2.900 1 2.900 3.500c-.6-1.400-1.600-1.800-2.900-1.800s-2.300.4-2.900 1.800z" fill="#8A8A8A"/></svg>
<span class="t" style="left:70px;top:604px;font-size:12px;letter-spacing:-0.15px;">Edeltrud Dahlmann  / Friedrich-List-Straße 5 / 35398 Gießen</span>
<span class="t" style="left:433.7px;top:604px;font-size:12px;letter-spacing:-0.18px;">Partner</span>
<span class="t" style="left:542px;top:604px;font-size:12px;letter-spacing:-0.45px;transform:scaleX(0.9569);">1002345686</span>
<span class="t" style="left:635.5px;top:604px;font-size:12px;letter-spacing:-0.38px;">Tel.: 641 / 510377</span>
<svg style="left:53px;top:622px" width="9" height="9" viewBox="0 0 9 9"><rect x=".5" y=".5" width="8" height="8" rx="1.500" fill="#F7FAFE" stroke="#6F9FDC"/><path d="M2.300 4.500h4.400" stroke="#3B6FB5" stroke-width="1.200"/></svg>
<svg style="left:70px;top:619px" width="17" height="17" viewBox="0 0 17 17"><rect x=".8" y=".8" width="14" height="14.500" rx="2.500" fill="#FBFBFB" stroke="#A8481C" stroke-width="1.600"/><path d="M4 5h8M8 5v7" stroke="#555" stroke-width="1.500"/><rect x="9.500" y="9.500" width="7" height="7" fill="#E8F1FB" stroke="#9DB7D9" stroke-width=".6"/><path d="M11 14.500l3.500-3.500" stroke="#2E8FE0" stroke-width="1.300"/></svg>
<span class="t" style="left:90px;top:622px;font-size:12px;letter-spacing:-0.45px;">DAHLMANN EDELTRUD</span>
<span class="t" style="left:433.7px;top:622px;font-size:12px;letter-spacing:-0.06px;">Vertragskonto</span>
<span class="t" style="left:544.5px;top:622px;font-size:12px;letter-spacing:-0.45px;transform:scaleX(0.9569);">2000100005</span>
<svg style="left:73px;top:640px" width="9" height="9" viewBox="0 0 9 9"><rect x=".5" y=".5" width="8" height="8" rx="1.500" fill="#F7FAFE" stroke="#6F9FDC"/><path d="M2.300 4.500h4.400" stroke="#3B6FB5" stroke-width="1.200"/></svg>
<svg style="left:90px;top:637px" width="17" height="16" viewBox="0 0 17 16"><path d="M3 8v7.500h11V8" fill="#F4F0EA" stroke="#CFC8BC" stroke-width=".6"/><rect x="7" y="10" width="3" height="5.500" fill="#B5651D"/><path d="M.8 8.800L8.500 1.500l7.700 7.300" stroke="#D8222A" stroke-width="2.200" fill="none" stroke-linejoin="miter"/></svg>
<span class="t" style="left:110px;top:640px;font-size:12px;letter-spacing:-0.21px;">Friedrich-List-Straße 5, Gießen</span>
<span class="t" style="left:433.7px;top:640px;font-size:12px;letter-spacing:-0.16px;">Verbrauchsstelle</span>
<span class="t" style="left:542px;top:640px;font-size:12px;letter-spacing:-0.45px;transform:scaleX(0.9569);">4000100005</span>
<svg style="left:112px;top:655px" width="15" height="16" viewBox="0 0 15 16"><path d="M.7 1.200h9.800l2.700 2.700v11.400H.7z" fill="#F7F7F7" stroke="#ABABAB" stroke-width=".9"/><rect x="2" y="2.300" width="8" height="1.600" fill="#4AA3E8"/><path d="M2.500 6h8M2.500 8.300h6.500M2.500 10.600h4.500M2.500 12.900h3.500" stroke="#B9C7D9" stroke-width=".9"/><path d="M6.300 12.300l5.500-6 1.700 1.500-5.500 6-2.300.8z" fill="#2E8FE0"/><path d="M6.300 12.300l1.700 1.500-2.300.8z" fill="#2A2A2A"/></svg>
<span class="t" style="left:130px;top:658px;font-size:12px;letter-spacing:-0.45px;transform:scaleX(0.9684);">Gas AKTIV</span>
<span class="t" style="left:433.7px;top:658px;font-size:12px;letter-spacing:-0.15px;">Vertrag</span>
<span class="t" style="left:542px;top:658px;font-size:12px;letter-spacing:-0.45px;transform:scaleX(0.9569);">3010100005</span>
<span class="t" style="left:635.5px;top:658px;font-size:12px;letter-spacing:-0.42px;">PRIVAT KOMPAKT</span>
<svg style="left:93px;top:676px" width="9" height="9" viewBox="0 0 9 9"><rect x=".5" y=".5" width="8" height="8" rx="1.500" fill="#F7FAFE" stroke="#6F9FDC"/><path d="M2.300 4.500h4.400" stroke="#3B6FB5" stroke-width="1.200"/></svg>
<svg style="left:112px;top:673px" width="15" height="16" viewBox="0 0 15 16"><path d="M.7 1.200h9.800l2.700 2.700v11.400H.7z" fill="#F7F7F7" stroke="#ABABAB" stroke-width=".9"/><rect x="2" y="2.300" width="8" height="1.600" fill="#4AA3E8"/><path d="M2.500 6h8M2.500 8.300h6.500M2.500 10.600h4.500M2.500 12.900h3.500" stroke="#B9C7D9" stroke-width=".9"/><path d="M6.300 12.300l5.500-6 1.700 1.500-5.500 6-2.300.8z" fill="#2E8FE0"/><path d="M6.300 12.300l1.700 1.500-2.300.8z" fill="#2A2A2A"/></svg>
<span class="t" style="left:130px;top:676px;font-size:12px;letter-spacing:-0.24px;">Strom AKTIV</span>
<span class="t" style="left:433.7px;top:676px;font-size:12px;letter-spacing:-0.15px;">Vertrag</span>
<span class="t" style="left:542px;top:676px;font-size:12px;letter-spacing:-0.45px;transform:scaleX(0.9569);">3000100005</span>
<svg style="left:113px;top:694px" width="9" height="9" viewBox="0 0 9 9"><rect x=".5" y=".5" width="8" height="8" rx="1.500" fill="#F7FAFE" stroke="#6F9FDC"/><path d="M2.300 4.500h4.400" stroke="#3B6FB5" stroke-width="1.200"/></svg>
<svg style="left:131px;top:691px" width="16" height="16" viewBox="0 0 16 16"><rect x="4" y="1" width="2" height="6" fill="#777"/><rect x="8" y="0" width="2" height="7" fill="#777"/><rect x="12" y="2" width="1.500" height="5" fill="#888"/><path d="M1 7h14v8H1z" fill="#8D8D8D"/><path d="M1 9.500h14" stroke="#E4E4E4" stroke-width="1.200"/><rect x="2.500" y="11.500" width="4" height="3.500" fill="#444"/><rect x="8" y="11.500" width="6" height="2" fill="#DADADA"/></svg>
<span class="t" style="left:150px;top:694px;font-size:12px;letter-spacing:-0.2px;">Strom, Gießen, Friedrich-List-Straße 5</span>
<span class="t" style="left:433.7px;top:694px;font-size:12px;letter-spacing:-0.01px;">Anlage</span>
<span class="t" style="left:542px;top:694px;font-size:12px;letter-spacing:-0.45px;transform:scaleX(0.9569);">7000100005</span>
<svg style="left:153px;top:709px" width="11" height="17" viewBox="0 0 11 17"><path d="M5.500 8.500V16" stroke="#9A9A9A" stroke-width="1.300"/><circle cx="5.500" cy="5" r="4" fill="#F1F1F1" stroke="#A8A8A8" stroke-width="1.200"/><path d="M4 3.500l2.500 2.500" stroke="#B5B5B5" stroke-width="1"/></svg>
<span class="t" style="left:170px;top:712px;font-size:12px;letter-spacing:-0.45px;transform:scaleX(0.9899);">DE00022935398400010023N5035O0843</span>
<span class="t" style="left:433.7px;top:712px;font-size:12px;letter-spacing:0.2px;">Zählpunkt</span>
<svg style="left:151px;top:727px" width="15" height="16" viewBox="0 0 15 16"><rect x=".5" y=".5" width="14" height="15" rx="1.500" fill="#3A3A3A" stroke="#222"/><rect x="2.500" y="3" width="10" height="4.500" fill="#F1F1F1"/><path d="M3.500 5.300h8" stroke="#555" stroke-width="1.200"/><rect x="10.500" y="3.300" width="1.500" height="1.500" fill="#D33"/><rect x="2.500" y="9" width="10" height="4.500" fill="#E4E4E4"/><path d="M4 11.300h7" stroke="#666" stroke-width="1"/></svg>
<span class="t" style="left:170px;top:730px;font-size:12px;letter-spacing:-0.45px;transform:scaleX(0.9796);">Strom SETD</span>
<span class="t" style="left:433.7px;top:730px;font-size:12px;letter-spacing:-0.43px;">Gerät</span>
<span class="t" style="left:542px;top:730px;font-size:12px;letter-spacing:-0.45px;transform:scaleX(0.9569);">8100000003</span>
<svg style="left:112px;top:745px" width="15" height="16" viewBox="0 0 15 16"><path d="M.7 1.200h9.800l2.700 2.700v11.400H.7z" fill="#F7F7F7" stroke="#ABABAB" stroke-width=".9"/><rect x="2" y="2.300" width="8" height="1.600" fill="#4AA3E8"/><path d="M2.500 6h8M2.500 8.300h6.500M2.500 10.600h4.500M2.500 12.900h3.500" stroke="#B9C7D9" stroke-width=".9"/><path d="M6.300 12.300l5.500-6 1.700 1.500-5.500 6-2.300.8z" fill="#2E8FE0"/><path d="M6.300 12.300l1.700 1.500-2.300.8z" fill="#2A2A2A"/></svg>
<span class="t" style="left:130px;top:748px;font-size:12px;letter-spacing:-0.45px;transform:scaleX(0.9845);">Wasser AKTIV</span>
<span class="t" style="left:433.7px;top:748px;font-size:12px;letter-spacing:-0.15px;">Vertrag</span>
<span class="t" style="left:542px;top:748px;font-size:12px;letter-spacing:-0.45px;transform:scaleX(0.9569);">3020100005</span>
<div style="left:28px;top:796px;width:845px;height:26px;background:#F8F8F8;border:1px solid #A9C6EC;border-top:none;"></div>
<span class="t" style="left:849px;top:803px;font-size:12px;letter-spacing:-0.34px;">2 / 2</span>
<svg style="left:23.5px;top:822.5px" width="7" height="5.5" viewBox="0 0 7 5.5"><path d="M.9 4.300L3.200 2.300l2.300 2" stroke="#0F1E35" stroke-width="1.900" fill="none"/></svg>
<svg style="left:36.5px;top:825px" width="7" height="5.5" viewBox="0 0 7 5.5"><path d="M.9 1.500l2.300 2 2.300-2" stroke="#0F1E35" stroke-width="1.900" fill="none"/></svg>
<svg style="left:628.45px;top:824.7px" width="32.6" height="4.6" viewBox="0 0 32.6 4.6"><circle cx="2.3" cy="2.3" r="1.8" fill="#48638A"/><circle cx="9.3" cy="2.3" r="1.8" fill="#48638A"/><circle cx="16.3" cy="2.3" r="1.8" fill="#48638A"/><circle cx="23.3" cy="2.3" r="1.8" fill="#48638A"/><circle cx="30.3" cy="2.3" r="1.8" fill="#48638A"/></svg>
<div style="left:883px;top:150px;width:391px;height:672px;background:#F8F8F8;border-left:1px solid #A9C6EC;border-bottom:1px solid #A9C6EC;"></div>
<div style="left:884px;top:150px;width:390px;height:25px;background:#EAF2FC;"></div>
<div style="left:884px;top:175px;width:390px;height:22px;background:#CADCF4;"></div>
<span class="t" style="left:1043px;top:180px;font-size:13px;color:#5B8FD9;font-weight:bold;letter-spacing:0.13px;">Aktionsbox</span>
<svg style="left:892px;top:152px" width="17" height="17" viewBox="0 0 17 17"><path d="M.5 2.500a1 1 0 0 1 1-1h4l1.500 2h6a1 1 0 0 1 1 1v8H.5z" fill="#D4D9E1"/><circle cx="12" cy="12" r="4" fill="#B5BCC8"/><path d="M12 14.500v-4.500M10 11.500l2-2 2 2" stroke="#fff" stroke-width="1.200" fill="none"/></svg>
<svg style="left:920px;top:152px" width="17" height="17" viewBox="0 0 17 17"><path d="M3 8.500V15h10V8.500" fill="#E1E5EB" stroke="#C5CBD5" stroke-width=".6"/><rect x="6.500" y="10" width="3.500" height="5" fill="#B5BCC8"/><path d="M1 9l7-6.500L15 9" stroke="#B5BCC8" stroke-width="2" fill="none"/></svg>
<div style="left:942px;top:152px;width:1px;height:22px;background:linear-gradient(#EAF2FC,#9FBEE9 35%,#9FBEE9 65%,#EAF2FC);"></div>
<svg style="left:949px;top:152px" width="18" height="17" viewBox="0 0 18 17"><path d="M.5 2a1 1 0 0 1 1-1h4.500l1.500 2h6a1 1 0 0 1 1 1v8.500H.5z" fill="#E5A93A"/><rect x=".5" y="4" width="14" height="8.500" rx=".8" fill="#EDB84E"/><circle cx="13" cy="12.5" r="3.8" fill="#2E9A2E" stroke="#1F7A1F" stroke-width=".6"/><path d="M10.8 12.5h4.400M13 10.3v4.400" stroke="#fff" stroke-width="1.300"/></svg>
<svg style="left:977px;top:152px" width="18" height="17" viewBox="0 0 18 17"><rect x=".5" y=".5" width="13" height="12" rx="1.500" fill="#CFCFCF" stroke="#B0B0B0"/><path d="M4 2.500l7 4-7 4z" fill="#6EBB2A"/><circle cx="13.5" cy="12.5" r="3.8" fill="#2E9A2E" stroke="#1F7A1F" stroke-width=".6"/><path d="M11.3 12.5h4.400M13.5 10.3v4.400" stroke="#fff" stroke-width="1.300"/></svg>
<svg style="left:1006px;top:153px" width="16" height="15" viewBox="0 0 16 15"><rect x="0" y="0" width="15" height="6" fill="#1F3F9A"/><path d="M0 0l15 6M15 0L0 6" stroke="#fff" stroke-width="1.500"/><path d="M0 3h15M7.500 0v6" stroke="#fff" stroke-width="2.200"/><path d="M0 3h15M7.500 0v6" stroke="#D8222A" stroke-width="1.200"/><rect x="0" y="6" width="15" height="3" fill="#111"/><rect x="0" y="9" width="15" height="3" fill="#D8222A"/><rect x="0" y="12" width="15" height="3" fill="#F0C419"/></svg>
<div style="left:1027px;top:152px;width:1px;height:22px;background:linear-gradient(#EAF2FC,#9FBEE9 35%,#9FBEE9 65%,#EAF2FC);"></div>
<svg style="left:1251.5px;top:153.5px" width="13" height="16" viewBox="0 0 13 16"><path d="M3 7.5V5a3.5 3.5 0 0 1 7 0v2.5" fill="none" stroke="#9A9A9A" stroke-width="1.8"/><rect x="1" y="7" width="11" height="8.5" rx="1" fill="#D9A92C"/><rect x="1.8" y="7.8" width="9.4" height="3.4" fill="#F3D46A"/></svg>
<svg style="left:935px;top:204px" width="23.5" height="19.5" viewBox="0 0 24 20"><defs><linearGradient id="fg6749" x1="0" y1="0" x2="0" y2="1"><stop offset="0" stop-color="#F4C463"/><stop offset="1" stop-color="#DB9A22"/></linearGradient></defs><path d="M1 2.5a1.5 1.5 0 0 1 1.5-1.5h7l2 2.5h10a1.5 1.5 0 0 1 1.500 1.500v13.5a1 1 0 0 1-1 1h-20a1 1 0 0 1-1-1z" fill="#D9A035"/><rect x="1" y="5" width="22" height="14.500" rx="1.2" fill="url(#fg6749)"/></svg>
<span class="t" style="left:905px;top:236px;font-size:12px;letter-spacing:-0.13px;">Weitere Funkti...</span>
<svg style="left:1061.5px;top:203px" width="22.5" height="20.5" viewBox="0 0 23 21"><defs><linearGradient id="ag7633" x1="0" y1="0" x2="0" y2="1"><stop offset="0" stop-color="#D6D6D6"/><stop offset="1" stop-color="#C4C4C4"/></linearGradient></defs><rect x=".5" y=".5" width="22" height="20" rx="2" fill="url(#ag7633)" stroke="#ABABAB"/><path d="M7 4.800l10.500 5.500L7 15.800z" fill="#6CBB2A"/><path d="M7 4.800l10.500 5.500H7z" fill="#86C93A"/></svg>
<span class="t" style="left:1015.5px;top:236px;font-size:12px;letter-spacing:-0.12px;">Abschlagsplan ändern</span>
<svg style="left:1187.5px;top:203px" width="22.5" height="20.5" viewBox="0 0 23 21"><defs><linearGradient id="ag8515" x1="0" y1="0" x2="0" y2="1"><stop offset="0" stop-color="#D6D6D6"/><stop offset="1" stop-color="#C4C4C4"/></linearGradient></defs><rect x=".5" y=".5" width="22" height="20" rx="2" fill="url(#ag8515)" stroke="#ABABAB"/><path d="M7 4.800l10.500 5.500L7 15.800z" fill="#6CBB2A"/><path d="M7 4.800l10.500 5.500H7z" fill="#86C93A"/></svg>
<span class="t" style="left:1158.5px;top:236px;font-size:12px;letter-spacing:-0.11px;">Bonitätsabfrage</span>
<svg style="left:935.5px;top:260px" width="22.5" height="20.5" viewBox="0 0 23 21"><defs><linearGradient id="ag6808" x1="0" y1="0" x2="0" y2="1"><stop offset="0" stop-color="#D6D6D6"/><stop offset="1" stop-color="#C4C4C4"/></linearGradient></defs><rect x=".5" y=".5" width="22" height="20" rx="2" fill="url(#ag6808)" stroke="#ABABAB"/><path d="M7 4.800l10.500 5.500L7 15.800z" fill="#6CBB2A"/><path d="M7 4.800l10.500 5.500H7z" fill="#86C93A"/></svg>
<span class="t" style="left:913px;top:293px;font-size:12px;letter-spacing:-0.3px;">CEG-Anfrage</span>
<svg style="left:1061.5px;top:260px" width="22.5" height="20.5" viewBox="0 0 23 21"><defs><linearGradient id="ag7690" x1="0" y1="0" x2="0" y2="1"><stop offset="0" stop-color="#D6D6D6"/><stop offset="1" stop-color="#C4C4C4"/></linearGradient></defs><rect x=".5" y=".5" width="22" height="20" rx="2" fill="url(#ag7690)" stroke="#ABABAB"/><path d="M7 4.800l10.500 5.500L7 15.800z" fill="#6CBB2A"/><path d="M7 4.800l10.500 5.500H7z" fill="#86C93A"/></svg>
<span class="t" style="left:1038.5px;top:293px;font-size:12px;letter-spacing:-0.19px;">Google Maps</span>
<svg style="left:1187.5px;top:260px" width="22.5" height="20.5" viewBox="0 0 23 21"><defs><linearGradient id="ag8572" x1="0" y1="0" x2="0" y2="1"><stop offset="0" stop-color="#D6D6D6"/><stop offset="1" stop-color="#C4C4C4"/></linearGradient></defs><rect x=".5" y=".5" width="22" height="20" rx="2" fill="url(#ag8572)" stroke="#ABABAB"/><path d="M7 4.800l10.500 5.500L7 15.800z" fill="#6CBB2A"/><path d="M7 4.800l10.500 5.500H7z" fill="#86C93A"/></svg>
<span class="t" style="left:1167px;top:293px;font-size:12px;letter-spacing:-0.45px;transform:scaleX(0.9819);">SMS senden</span>
<svg style="left:935.5px;top:317px" width="22.5" height="20.5" viewBox="0 0 23 21"><defs><linearGradient id="ag6865" x1="0" y1="0" x2="0" y2="1"><stop offset="0" stop-color="#D6D6D6"/><stop offset="1" stop-color="#C4C4C4"/></linearGradient></defs><rect x=".5" y=".5" width="22" height="20" rx="2" fill="url(#ag6865)" stroke="#ABABAB"/><path d="M7 4.800l10.500 5.500L7 15.800z" fill="#6CBB2A"/><path d="M7 4.800l10.500 5.500H7z" fill="#86C93A"/></svg>
<span class="t" style="left:908px;top:350px;font-size:12px;letter-spacing:-0.45px;transform:scaleX(0.9842);">SAP BW zeigen</span>
<svg style="left:1061.5px;top:317px" width="22.5" height="20.5" viewBox="0 0 23 21"><defs><linearGradient id="ag7747" x1="0" y1="0" x2="0" y2="1"><stop offset="0" stop-color="#D6D6D6"/><stop offset="1" stop-color="#C4C4C4"/></linearGradient></defs><rect x=".5" y=".5" width="22" height="20" rx="2" fill="url(#ag7747)" stroke="#ABABAB"/><path d="M7 4.800l10.500 5.500L7 15.800z" fill="#6CBB2A"/><path d="M7 4.800l10.500 5.500H7z" fill="#86C93A"/></svg>
<span class="t" style="left:1033px;top:350px;font-size:12px;letter-spacing:-0.45px;transform:scaleX(0.9857);">SAP CIC zeigen</span>
<svg style="left:1187.5px;top:317px" width="22.5" height="20.5" viewBox="0 0 23 21"><defs><linearGradient id="ag8629" x1="0" y1="0" x2="0" y2="1"><stop offset="0" stop-color="#D6D6D6"/><stop offset="1" stop-color="#C4C4C4"/></linearGradient></defs><rect x=".5" y=".5" width="22" height="20" rx="2" fill="url(#ag8629)" stroke="#ABABAB"/><path d="M7 4.800l10.500 5.500L7 15.800z" fill="#6CBB2A"/><path d="M7 4.800l10.500 5.500H7z" fill="#86C93A"/></svg>
<span class="t" style="left:1165.5px;top:350px;font-size:12px;letter-spacing:-0.23px;">SLP Angebot</span>
<svg style="left:935px;top:375px" width="23.5" height="19.5" viewBox="0 0 24 20"><defs><linearGradient id="fg6920" x1="0" y1="0" x2="0" y2="1"><stop offset="0" stop-color="#F4C463"/><stop offset="1" stop-color="#DB9A22"/></linearGradient></defs><path d="M1 2.5a1.5 1.5 0 0 1 1.5-1.5h7l2 2.5h10a1.5 1.5 0 0 1 1.500 1.500v13.5a1 1 0 0 1-1 1h-20a1 1 0 0 1-1-1z" fill="#D9A035"/><rect x="1" y="5" width="22" height="14.500" rx="1.2" fill="url(#fg6920)"/></svg>
<span class="t" style="left:928.5px;top:407px;font-size:12px;letter-spacing:-0.25px;">Umzug</span>
<svg style="left:1061.5px;top:374px" width="22.5" height="20.5" viewBox="0 0 23 21"><defs><linearGradient id="ag7804" x1="0" y1="0" x2="0" y2="1"><stop offset="0" stop-color="#D6D6D6"/><stop offset="1" stop-color="#C4C4C4"/></linearGradient></defs><rect x=".5" y=".5" width="22" height="20" rx="2" fill="url(#ag7804)" stroke="#ABABAB"/><path d="M7 4.800l10.500 5.500L7 15.800z" fill="#6CBB2A"/><path d="M7 4.800l10.500 5.500H7z" fill="#86C93A"/></svg>
<span class="t" style="left:1016px;top:407px;font-size:12px;letter-spacing:-0.02px;">Zählerstandsmeldung</span>
<svg style="left:1187.5px;top:374px" width="22.5" height="20.5" viewBox="0 0 23 21"><defs><linearGradient id="ag8686" x1="0" y1="0" x2="0" y2="1"><stop offset="0" stop-color="#D6D6D6"/><stop offset="1" stop-color="#C4C4C4"/></linearGradient></defs><rect x=".5" y=".5" width="22" height="20" rx="2" fill="url(#ag8686)" stroke="#ABABAB"/><path d="M7 4.800l10.500 5.500L7 15.800z" fill="#6CBB2A"/><path d="M7 4.800l10.500 5.500H7z" fill="#86C93A"/></svg>
<span class="t" style="left:1149px;top:407px;font-size:12px;letter-spacing:0.02px;">Zwischenrechnung</span>
<svg style="left:935.5px;top:431px" width="22.5" height="20.5" viewBox="0 0 23 21"><defs><linearGradient id="ag6979" x1="0" y1="0" x2="0" y2="1"><stop offset="0" stop-color="#D6D6D6"/><stop offset="1" stop-color="#C4C4C4"/></linearGradient></defs><rect x=".5" y=".5" width="22" height="20" rx="2" fill="url(#ag6979)" stroke="#ABABAB"/><path d="M7 4.800l10.500 5.500L7 15.800z" fill="#6CBB2A"/><path d="M7 4.800l10.500 5.500H7z" fill="#86C93A"/></svg>
<span class="t" style="left:907.5px;top:464px;font-size:12px;letter-spacing:-0.33px;">Adresse ändern</span>
<div style="left:907px;top:501px;width:342px;height:199px;box-shadow:2px 2px 2.5px 0 rgba(40,40,40,.6);"></div>
<div style="left:902px;top:495px;width:347px;height:205px;background:#EAF2FB;border:1px solid #7DA6E0;"></div>
<div style="left:903px;top:496px;width:25px;height:203px;background:linear-gradient(to right,#F1F6FD,#DEE9F8);"></div>
<div style="left:929px;top:539px;width:318px;height:1px;background:#8FB4E6;"></div>
<div style="left:929px;top:584px;width:318px;height:1px;background:#8FB4E6;"></div>
<div style="left:929px;top:608px;width:318px;height:1px;background:#8FB4E6;"></div>
<div style="left:929px;top:674px;width:318px;height:1px;background:#8FB4E6;"></div>
<div style="left:904px;top:677px;width:343px;height:21px;background:linear-gradient(#CFE0F6,#C2D8F3 55%,#D3E3F7);border:1px solid #A6C3EB;border-radius:2px;"></div>
<span class="t" style="left:932px;top:502px;font-size:12px;letter-spacing:-0.12px;">Neuer Ordner</span>
<span class="t" style="left:1202.5px;top:502px;font-size:12px;letter-spacing:-0.34px;">Einfg</span>
<span class="t" style="left:932px;top:523px;font-size:12px;letter-spacing:0.08px;">Neue Aktion</span>
<span class="t" style="left:1173px;top:523px;font-size:12px;letter-spacing:-0.1px;">Strg+Einfg</span>
<span class="t" style="left:932px;top:547px;font-size:12px;letter-spacing:-0.08px;">Sortieren (Ordner und Einträge getrennt)</span>
<span class="t" style="left:932px;top:568px;font-size:12px;letter-spacing:-0.08px;">Sortieren (Ordner und Einträge gemischt)</span>
<span class="t" style="left:932px;top:592px;font-size:12px;color:#8F8F8F;letter-spacing:-0.05px;">Einfügen</span>
<span class="t" style="left:1193px;top:592px;font-size:12px;color:#8F8F8F;letter-spacing:-0.31px;">Strg+V</span>
<span class="t" style="left:932px;top:615.5px;font-size:12px;letter-spacing:-0.05px;">Aktionsbox exportieren</span>
<span class="t" style="left:932px;top:636.5px;font-size:12px;letter-spacing:0.09px;">Aktionsbox importieren</span>
<span class="t" style="left:932px;top:657.5px;font-size:12px;letter-spacing:-0.29px;">Anzeige XML</span>
<span class="t" style="left:932px;top:681.5px;font-size:12px;letter-spacing:0.23px;">Administration</span>
<svg style="left:908px;top:499px" width="18" height="17" viewBox="0 0 18 17"><path d="M.5 2a1 1 0 0 1 1-1h4.500l1.500 2h5.500a1 1 0 0 1 1 1v8H.5z" fill="#E5A93A"/><rect x=".5" y="4" width="13.500" height="8" rx=".8" fill="#EDB84E"/><circle cx="13" cy="12.5" r="3.8" fill="#2E9A2E" stroke="#1F7A1F" stroke-width=".6"/><path d="M10.8 12.5h4.400M13 10.3v4.400" stroke="#fff" stroke-width="1.300"/></svg>
<svg style="left:908px;top:520.5px" width="18" height="17" viewBox="0 0 18 17"><rect x=".5" y=".5" width="12.500" height="11.500" rx="1.500" fill="#CFCFCF" stroke="#B0B0B0"/><path d="M4 2.500l6.500 3.800L4 10z" fill="#6EBB2A"/><circle cx="13" cy="12.5" r="3.8" fill="#2E9A2E" stroke="#1F7A1F" stroke-width=".6"/><path d="M10.8 12.5h4.400M13 10.3v4.400" stroke="#fff" stroke-width="1.300"/></svg>
<svg style="left:909px;top:544px" width="15" height="17" viewBox="0 0 15 17"><text x="0" y="7" font-family="Liberation Serif,serif" font-size="8" font-weight="bold" fill="#222">A</text><text x="0" y="15.500" font-family="Liberation Serif,serif" font-size="8" font-weight="bold" fill="#D8222A">Z</text><path d="M10.500 .5v13" stroke="#2E9BE0" stroke-width="2.400"/><path d="M6.500 10.500l4 5.500 4-5.500z" fill="#2E9BE0"/></svg>
<svg style="left:909px;top:565px" width="15" height="17" viewBox="0 0 15 17"><rect x="0" y="1" width="4" height="4" rx="1" fill="#5CB32C"/><rect x="0" y="6.500" width="4" height="4" rx="1" fill="#2E8FE0"/><rect x="0" y="12" width="4" height="4" rx="1" fill="#5CB32C"/><path d="M10.500 .5v13" stroke="#2E9BE0" stroke-width="2.400"/><path d="M6.500 10.500l4 5.500 4-5.500z" fill="#2E9BE0"/></svg>
<svg style="left:909px;top:589.5px" width="14" height="17" viewBox="0 0 14 17"><rect x="1" y="2.500" width="11.500" height="13.500" rx="1.500" fill="#F4F6F9" stroke="#B9C0CC" stroke-width="1.200"/><rect x="4" y=".8" width="5.500" height="3" rx="1" fill="#C9CFD8"/></svg>
<svg style="left:908px;top:612px" width="18" height="18" viewBox="0 0 18 18"><path d="M1 .5h7.500l3.500 3.500v12.500H1z" fill="#F7F7F7" stroke="#C4C4C4" stroke-width=".8"/><path d="M14.800 12a4 4 0 1 1-1.500-4" stroke="#2E8FD6" stroke-width="2.200" fill="none"/><path d="M11.500 6l4 .3-1.200 3.700z" fill="#2E8FD6"/></svg>
<svg style="left:908px;top:633px" width="18" height="18" viewBox="0 0 18 18"><path d="M1 .5h7.500l3.500 3.500v12.500H1z" fill="#F7F7F7" stroke="#C4C4C4" stroke-width=".8"/><path d="M16 10v4h-5.500v2.500L5 12l5.500-4.500V10z" fill="#4CAF2A" stroke="#3A8F1F" stroke-width=".5"/></svg>
<svg style="left:908px;top:654px" width="17" height="18" viewBox="0 0 17 18"><path d="M2 .5h8.500l3.500 3.500v13H2z" fill="#F7F7F7" stroke="#C4C4C4" stroke-width=".8"/><rect x="0" y="5" width="15" height="6.500" fill="#2E7FD0"/><text x="7.500" y="10.300" font-family="Liberation Sans,sans-serif" font-size="5.800" font-weight="bold" fill="#fff" text-anchor="middle">XML</text></svg>
<svg style="left:911.5px;top:679.5px" width="13" height="16" viewBox="0 0 13 16"><path d="M3 7.5V5a3.5 3.5 0 0 1 7 0v2.5" fill="none" stroke="#9A9A9A" stroke-width="1.8"/><rect x="1" y="7" width="11" height="8.5" rx="1" fill="#D9A92C"/><rect x="1.8" y="7.8" width="9.4" height="3.4" fill="#F3D46A"/></svg>
<svg style="left:1235px;top:682px" width="8" height="11" viewBox="0 0 8 11"><path d="M1.500 1.500L5.800 5.500 1.500 9.500" stroke="#3F82D8" stroke-width="2.200" fill="none"/></svg>
<div style="left:635.5px;top:679px;width:1.5px;height:9px;background:#222;"></div>
<div style="left:635.5px;top:697px;width:1.5px;height:9px;background:#222;"></div>
<div style="left:637px;top:677px;width:267px;height:112px;background:#EAF2FB;border:1px solid #7DA6E0;"></div>
<div style="left:638px;top:678px;width:25px;height:110px;background:linear-gradient(to right,#F1F6FD,#DEE9F8);"></div>
<div style="left:634px;top:739px;width:274px;height:54px;border:5px solid #ED1C24;"></div>
<div style="left:639px;top:745px;width:264px;height:21px;background:linear-gradient(#BAD3F4,#A7C7EF 50%,#A9C8F0 70%,#C0D7F5);border:1px solid #7DA6E0;"></div>
<div style="left:639px;top:766px;width:24px;height:22px;background:linear-gradient(to right,#F1F6FD,#DEE9F8);"></div>
<span class="t" style="left:667px;top:684px;font-size:12px;letter-spacing:-0.17px;">Lade persönlichen Bereich</span>
<span class="t" style="left:667px;top:705px;font-size:12px;letter-spacing:-0.17px;">Lade gruppenspezifischen Bereich</span>
<span class="t" style="left:667px;top:726px;font-size:12px;letter-spacing:-0.24px;">Lade systemspezifischen Bereich</span>
<span class="t" style="left:667px;top:749.5px;font-size:12px;letter-spacing:-0.18px;">Speichern als gruppenspezifischen Bereich</span>
<span class="t" style="left:667px;top:770.5px;font-size:12px;letter-spacing:-0.23px;">Speichern als systemspezifischen Bereich</span>
<svg style="left:645px;top:680.5px" width="17" height="18" viewBox="0 0 17 18"><path d="M1.500 2l5-1.500v14l-5 1.500z" fill="#C9962A"/><path d="M3 2.500l6-.5a1 1 0 0 1 1 1v11.500l-7 .5z" fill="#E5B54A"/><path d="M6.500 2.200v12.800" stroke="#B5821F" stroke-width=".8"/></svg>
<svg style="left:645px;top:701.5px" width="17" height="18" viewBox="0 0 17 18"><path d="M1.500 2l5-1.500v14l-5 1.500z" fill="#C9962A"/><path d="M3 2.500l6-.5a1 1 0 0 1 1 1v11.500l-7 .5z" fill="#E5B54A"/><path d="M6.500 2.200v12.800" stroke="#B5821F" stroke-width=".8"/><path d="M10.500 12v-1.500a2 2 0 0 1 4 0V12" fill="none" stroke="#A8A8A8" stroke-width="1.300"/><rect x="9.500" y="11.500" width="6" height="5" rx=".6" fill="#EBCB5C" stroke="#C9A030" stroke-width=".5"/></svg>
<svg style="left:645px;top:722.5px" width="17" height="18" viewBox="0 0 17 18"><path d="M1.500 2l5-1.500v14l-5 1.500z" fill="#C9962A"/><path d="M3 2.500l6-.5a1 1 0 0 1 1 1v11.500l-7 .5z" fill="#E5B54A"/><path d="M6.500 2.200v12.800" stroke="#B5821F" stroke-width=".8"/><path d="M10.500 12v-1.500a2 2 0 0 1 4 0V12" fill="none" stroke="#A8A8A8" stroke-width="1.300"/><rect x="9.500" y="11.500" width="6" height="5" rx=".6" fill="#EBCB5C" stroke="#C9A030" stroke-width=".5"/></svg>
<svg style="left:644px;top:747px" width="18" height="18" viewBox="0 0 18 18"><path d="M.5.500h12l2 2v12H.5z" fill="#2B2B2B"/><rect x="3.500" y="1" width="7.500" height="4.500" fill="#F2F2F2"/><rect x="8.500" y="1.600" width="1.800" height="3.300" fill="#2B2B2B"/><rect x="2.500" y="8" width="10" height="6.500" fill="#5AA0E8"/><rect x="2.500" y="8" width="10" height="3" fill="#F1F1F1"/><path d="M12 12.500V11a2 2 0 0 1 4 0v1.500" fill="none" stroke="#A8A8A8" stroke-width="1.300"/><rect x="11" y="12.500" width="6" height="5" rx=".6" fill="#EBCB5C" stroke="#C9A030" stroke-width=".5"/></svg>
<svg style="left:644px;top:768px" width="18" height="18" viewBox="0 0 18 18"><path d="M.5.500h12l2 2v12H.5z" fill="#2B2B2B"/><rect x="3.500" y="1" width="7.500" height="4.500" fill="#F2F2F2"/><rect x="8.500" y="1.600" width="1.800" height="3.300" fill="#2B2B2B"/><rect x="2.500" y="8" width="10" height="6.500" fill="#5AA0E8"/><rect x="2.500" y="8" width="10" height="3" fill="#F1F1F1"/><path d="M12 12.500V11a2 2 0 0 1 4 0v1.500" fill="none" stroke="#A8A8A8" stroke-width="1.300"/><rect x="11" y="12.500" width="6" height="5" rx=".6" fill="#EBCB5C" stroke="#C9A030" stroke-width=".5"/></svg>
</div>
</body>
</html>
